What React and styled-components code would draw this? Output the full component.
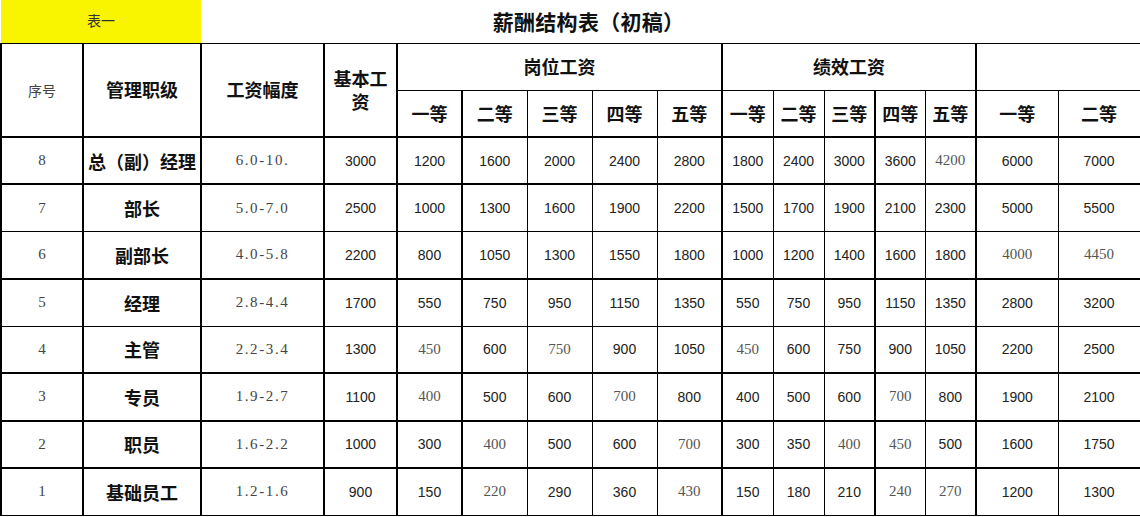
import React from 'react'
import styled, { createGlobalStyle } from 'styled-components'

const GlobalStyle = createGlobalStyle`
  html, body {
    margin: 0;
    padding: 0;
    background: #fff;
  }
  body {
    font-family: "Liberation Sans", "Noto Sans CJK SC", sans-serif;
    color: #222;
  }
`

const CJK = `"Noto Sans CJK SC", "Liberation Sans", sans-serif`

// column widths, measured border to border
const widths = [82, 118, 123, 73, 65, 65, 65, 65, 65, 51, 51, 51, 50, 51, 82, 82]
// right border of each column: true = thick line
const thickRight = [true, true, true, true, true, false, false, false, true, false, false, true, false, true, false, false]

const rows = [
  [8, '总（副）经理', '6.0-10.', 3000, [1200, 1600, 2000, 2400, 2800], [1800, 2400, 3000, 3600, 4200], [6000, 7000]],
  [7, '部长', '5.0-7.0', 2500, [1000, 1300, 1600, 1900, 2200], [1500, 1700, 1900, 2100, 2300], [5000, 5500]],
  [6, '副部长', '4.0-5.8', 2200, [800, 1050, 1300, 1550, 1800], [1000, 1200, 1400, 1600, 1800], [4000, 4450]],
  [5, '经理', '2.8-4.4', 1700, [550, 750, 950, 1150, 1350], [550, 750, 950, 1150, 1350], [2800, 3200]],
  [4, '主管', '2.2-3.4', 1300, [450, 600, 750, 900, 1050], [450, 600, 750, 900, 1050], [2200, 2500]],
  [3, '专员', '1.9-2.7', 1100, [400, 500, 600, 700, 800], [400, 500, 600, 700, 800], [1900, 2100]],
  [2, '职员', '1.6-2.2', 1000, [300, 400, 500, 600, 700], [300, 350, 400, 450, 500], [1600, 1750]],
  [1, '基础员工', '1.2-1.6', 900, [150, 220, 290, 360, 430], [150, 180, 210, 240, 270], [1200, 1300]],
]

// cells typed in the other (songti-like) font in the sheet: "seq-column"
const serifCells = new Set([
  '8-13', '6-14', '6-15',
  '4-4', '4-6', '4-9',
  '3-4', '3-7', '3-12',
  '2-5', '2-8', '2-11', '2-12',
  '1-5', '1-8', '1-12', '1-13',
])

const thinBottomRows = [1, 3, 7]
const grades = ['一等', '二等', '三等', '四等', '五等']

const Page = styled.div`
  width: 1140px;
  height: 517px;
  overflow: hidden;
`

const Sheet = styled.table`
  border-collapse: collapse;
  table-layout: fixed;
  width: 1139px;
`

const Col = styled.col`
  width: ${p => p.$w}px;
`

const TitleRow = styled.tr`
  height: 43px;
`

const HeadRow = styled.tr`
  height: 47px;
`

const DataRow = styled.tr`
  height: 47.25px;
`

const Label = styled.td`
  padding: 0 0 2px;
  background: #f9f500;
  text-align: center;
  vertical-align: middle;
  font-family: "Noto Sans CJK SC", sans-serif;
  font-size: 14px;
  color: #333;
`

const Title = styled.td`
  padding: 0;
  text-align: center;
  vertical-align: middle;
  font-family: ${CJK};
  font-weight: 700;
  font-size: 21px;
  letter-spacing: 0.3px;
  color: #111;
`

const Blank = styled.td`
  padding: 0;
`

const Cell = styled.td`
  padding: 0 3px;
  text-align: center;
  vertical-align: middle;
  white-space: nowrap;
  overflow: hidden;
  border-right: ${p => (p.$thin ? 1 : 2)}px solid #000;
  border-bottom: ${p => (p.$thinBottom ? 1 : 2)}px solid #000;
  border-left: ${p => (p.$first ? '2px solid #000' : 'none')};
  border-top: ${p => (p.$top ? '1px solid #000' : 'none')};
`

const Head = styled(Cell)`
  font-family: ${CJK};
  font-weight: 700;
  font-size: 18px;
  line-height: 23px;
  color: #111;
  white-space: normal;
  word-break: break-all;
  padding: 0 4px;
`

const SeqHead = styled(Cell)`
  font-family: ${CJK};
  font-size: 14px;
  color: #444;
`

const Seq = styled(Cell)`
  font-family: "Liberation Serif", serif;
  font-size: 15px;
  color: #444;
`

const Name = styled(Cell)`
  font-family: ${CJK};
  font-weight: 700;
  font-size: 18px;
  color: #111;
  padding: 0;
`

const Range = styled(Cell)`
  font-family: "Liberation Serif", serif;
  font-size: 15px;
  letter-spacing: 1.6px;
  color: #444;
`

const Num = styled(Cell)`
  font-family: ${p => (p.$serif ? '"Liberation Serif", serif' : '"Liberation Sans", sans-serif')};
  font-size: ${p => (p.$serif ? 15 : 14)}px;
  color: ${p => (p.$serif ? '#555' : '#222')};
`

function SalaryRow({ row, index }) {
  const [seq, name, range, base, post, perf, extra] = row
  const thinBottom = thinBottomRows.includes(index)
  const values = [...post, ...perf, ...extra]
  return (
    <DataRow>
      <Seq $first $thinBottom={thinBottom}>{seq}</Seq>
      <Name $thinBottom={thinBottom}>{name}</Name>
      <Range $thinBottom={thinBottom}>{range}</Range>
      <Num $thinBottom={thinBottom}>{base}</Num>
      {values.map((v, i) => {
        const col = i + 4
        return (
          <Num
            key={col}
            $thin={!thickRight[col]}
            $thinBottom={thinBottom}
            $serif={serifCells.has(`${seq}-${col}`)}
          >
            {v}
          </Num>
        )
      })}
    </DataRow>
  )
}

export default function App() {
  return (
    <Page>
      <GlobalStyle />
      <Sheet>
        <colgroup>
          {widths.map((w, i) => <Col key={i} $w={w} />)}
        </colgroup>
        <tbody>
          <TitleRow>
            <Label colSpan={2}>表一</Label>
            <Title colSpan={12}>薪酬结构表（初稿）</Title>
            <Blank colSpan={2} />
          </TitleRow>
          <HeadRow>
            <SeqHead rowSpan={2} $first $top>序号</SeqHead>
            <Head rowSpan={2} $top>管理职级</Head>
            <Head rowSpan={2} $top>工资幅度</Head>
            <Head rowSpan={2} $top>基本工资</Head>
            <Head colSpan={5} $top $thinBottom>岗位工资</Head>
            <Head colSpan={5} $top $thinBottom>绩效工资</Head>
            <Head colSpan={2} $top $thinBottom $thin />
          </HeadRow>
          <HeadRow>
            {[...grades, ...grades, '一等', '二等'].map((g, i) => (
              <Head key={i} $thin={!thickRight[i + 4]}>{g}</Head>
            ))}
          </HeadRow>
          {rows.map((row, i) => (
            <SalaryRow key={row[0]} row={row} index={i} />
          ))}
        </tbody>
      </Sheet>
    </Page>
  )
}
